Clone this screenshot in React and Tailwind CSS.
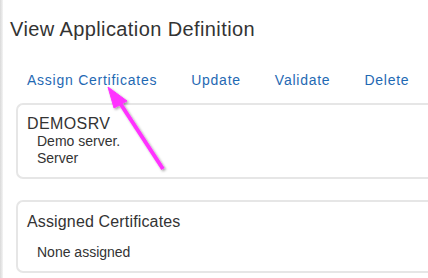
export default function App() {
  const links = ['Assign Certificates', 'Update', 'Validate', 'Delete'];
  return (
    <div className="relative h-[278px] w-[428px] overflow-hidden bg-white" style={{ fontFamily: '"Liberation Sans", Arial, sans-serif' }}>
      <div className="flex h-full">
        <div className="w-[3px] shrink-0 bg-gradient-to-r from-[#d9d9d9] to-[#f4f4f4]" />
        <div className="min-w-0 flex-1 pl-[7px] pt-[17px]">
          <h1 className="text-[20px] leading-[24px] tracking-[0.4px] text-[#333]">View Application Definition</h1>
          <div className="mt-[30px] flex gap-[34px] pl-[17px] text-[14px] leading-[18px] tracking-[0.75px] text-[#1f69b3]">
            {links.map((l) => (
              <a key={l} href="#" className="whitespace-nowrap hover:underline">{l}</a>
            ))}
          </div>
          <div className="mt-[14px] ml-[6px] rounded-l-[7px] border-y-2 border-l-2 border-r-0 border-[#e6e6e6] pt-[10px] pb-[10px] pl-[9px] text-[#333]">
            <div className="text-[16px] leading-[18px] tracking-[0.4px]">DEMOSRV</div>
            <div className="pl-[10px] text-[14px] leading-[17px]">
              <div>Demo server.</div>
              <div>Server</div>
            </div>
          </div>
          <div className="mt-[21px] ml-[6px] h-[73px] rounded-l-[7px] border-y-2 border-l-2 border-r-0 border-[#e6e6e6] pt-[11px] pl-[9px] text-[#333]">
            <div className="text-[16px] leading-[18px] tracking-[0.15px]">Assigned Certificates</div>
            <div className="mt-[13px] pl-[10px] text-[14px] leading-[17px]">None assigned</div>
          </div>
        </div>
      </div>
      <svg className="pointer-events-none absolute left-0 top-0" width="428" height="278">
        <defs>
          <filter id="sh" x="-20%" y="-20%" width="140%" height="140%">
            <feDropShadow dx="1.5" dy="1.5" stdDeviation="1" floodColor="#000" floodOpacity="0.35" />
          </filter>
        </defs>
        <g filter="url(#sh)" fill="#ff33ff" stroke="#ff33ff">
          <line x1="163" y1="169" x2="118" y2="100" strokeWidth="4" />
          <polygon points="108,87 127,101 114,108" strokeWidth="1" />
        </g>
      </svg>
    </div>
  );
}
